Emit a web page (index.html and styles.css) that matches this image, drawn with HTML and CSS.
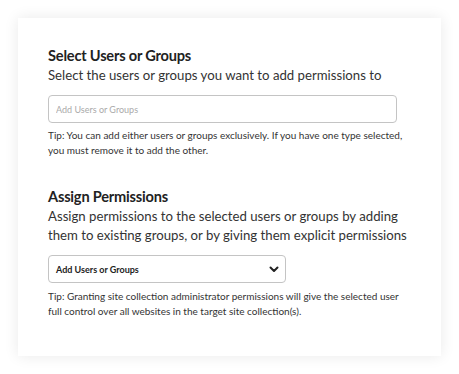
FILE: index.html
```html
<!DOCTYPE html>
<html lang="en">
<head>
  <meta charset="UTF-8">
  <meta name="viewport" content="width=device-width, initial-scale=1.0">
  <title>Permissions</title>
  <link rel="stylesheet" href="styles.css">
</head>
<body>
  <div class="card">
    <section class="section">
      <h2 class="section-title">Select Users or Groups</h2>
      <p class="section-desc">Select the users or groups you want to add permissions to</p>
      <input class="text-input" type="text" placeholder="Add Users or Groups">
      <p class="tip">Tip: You can add either users or groups exclusively. If you have one type selected, you must remove it to add the other.</p>
    </section>

    <section class="section second">
      <h2 class="section-title">Assign Permissions</h2>
      <p class="section-desc">Assign permissions to the selected users or groups by adding them to existing groups, or by giving them explicit permissions</p>
      <div class="select-box">
        <span class="select-label">Add Users or Groups</span>
        <svg class="chevron" width="10" height="7" viewBox="0 0 10 7">
          <path d="M1.5 1.5 L5 5 L8.5 1.5" fill="none" stroke="#222" stroke-width="2" stroke-linecap="round" stroke-linejoin="round"/>
        </svg>
      </div>
      <p class="tip">Tip: Granting site collection administrator permissions will give the selected user full control over all websites in the target site collection(s).</p>
    </section>
  </div>
</body>
</html>
```

FILE: styles.css
```css
body {
  margin: 0;
  background: #ffffff;
  font-family: Lato, 'Liberation Sans', sans-serif;
  color: #333;
}

/* Card */
.card {
  box-sizing: border-box;
  margin: 18px;
  width: 423px;
  height: 338px;
  padding: 28px 30px;
  background: #fff;
  box-shadow: 0 0 14px rgba(0, 0, 0, 0.09);
}

.second {
  margin-top: 30px;
}

.section-title {
  margin: 0;
  font-size: 14.6px;
  line-height: 20px;
  font-weight: 700;
  letter-spacing: -0.2px;
  color: #222;
}

.section-desc {
  margin: 0;
  font-size: 13.2px;
  line-height: 19px;
  color: #333;
}

.text-input {
  display: block;
  box-sizing: border-box;
  margin-top: 10px;
  width: 349px;
  height: 28px;
  padding: 0 7px;
  border: 1px solid #c4c4c4;
  border-radius: 4px;
  font-family: inherit;
  font-size: 9px;
  outline: none;
}

.text-input::placeholder {
  color: #aaa;
}

.tip {
  margin: 5px 0 0;
  font-size: 10px;
  line-height: 14.5px;
  color: #333;
}

.select-box + .tip {
  margin-top: 6px;
}

/* Dropdown */
.select-box {
  box-sizing: border-box;
  display: flex;
  align-items: center;
  justify-content: space-between;
  margin-top: 10px;
  width: 238px;
  height: 28px;
  padding: 0 6px 0 7px;
  border: 1px solid #c4c4c4;
  border-radius: 4px;
}

.select-label {
  font-size: 9px;
  font-weight: 700;
  color: #222;
}
```
